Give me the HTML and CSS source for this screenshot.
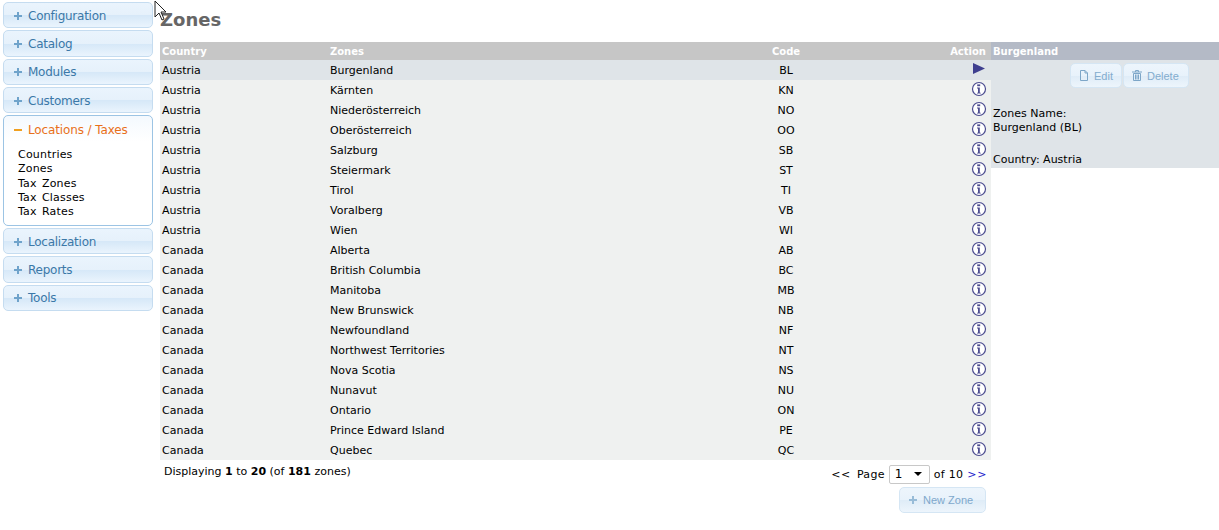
FILE: index.html
```html
<!DOCTYPE html>
<html lang="en">
<head>
<meta charset="utf-8">
<title>Zones</title>
<link rel="stylesheet" href="styles.css">
</head>
<body>
<svg class="cursor" width="14" height="22" viewBox="0 0 14 22"><path d="M1 1v16l4-4 3 7 2-1-3-7h5z" fill="#fff" stroke="#222" stroke-width="1"/></svg>
<svg width="0" height="0" class="defs"><defs>
<symbol id="info" viewBox="0 0 16 16"><circle cx="8" cy="8" r="6.5" fill="#fff" stroke="#4b4b8f" stroke-width="1.2"/><rect x="6.2" y="3.4" width="3" height="1.8" fill="#4b4b8f"/><path d="M6 6.5h2.8v5.2h1v.9H6v-.9h1V7.400H6z" fill="#4b4b8f"/></symbol>
</defs></svg>
<div class="page">
<nav class="side">
<a class="acc"><span class="pm"></span>Configuration</a>
<a class="acc"><span class="pm"></span>Catalog</a>
<a class="acc"><span class="pm"></span>Modules</a>
<a class="acc"><span class="pm"></span>Customers</a>
<div class="open">
<a class="acc-h"><span class="minus"></span>Locations / Taxes</a>
<ul class="sub">
<li>Countries</li><li>Zones</li><li>Tax Zones</li><li>Tax Classes</li><li>Tax Rates</li>
</ul>
</div>
<a class="acc"><span class="pm"></span>Localization</a>
<a class="acc"><span class="pm"></span>Reports</a>
<a class="acc"><span class="pm"></span>Tools</a>
</nav>
<main class="main">
<h1 class="title">Zones</h1>
<div class="work">
<div class="list">
<table class="grid">
<thead><tr><th class="c1">Country</th><th class="c2">Zones</th><th class="c3">Code</th><th class="c4">Action</th></tr></thead>
<tbody>
<tr class="sel"><td>Austria</td><td>Burgenland</td><td class="ctr">BL</td><td class="act"><svg class="play" width="12" height="11" viewBox="0 0 12 11"><path d="M0 0l12 5.500L0 11z" fill="#3f3f8f"/></svg></td></tr>
<tr><td>Austria</td><td>Kärnten</td><td class="ctr">KN</td><td class="act"><svg class="ic"><use href="#info"/></svg></td></tr>
<tr><td>Austria</td><td>Niederösterreich</td><td class="ctr">NO</td><td class="act"><svg class="ic"><use href="#info"/></svg></td></tr>
<tr><td>Austria</td><td>Oberösterreich</td><td class="ctr">OO</td><td class="act"><svg class="ic"><use href="#info"/></svg></td></tr>
<tr><td>Austria</td><td>Salzburg</td><td class="ctr">SB</td><td class="act"><svg class="ic"><use href="#info"/></svg></td></tr>
<tr><td>Austria</td><td>Steiermark</td><td class="ctr">ST</td><td class="act"><svg class="ic"><use href="#info"/></svg></td></tr>
<tr><td>Austria</td><td>Tirol</td><td class="ctr">TI</td><td class="act"><svg class="ic"><use href="#info"/></svg></td></tr>
<tr><td>Austria</td><td>Voralberg</td><td class="ctr">VB</td><td class="act"><svg class="ic"><use href="#info"/></svg></td></tr>
<tr><td>Austria</td><td>Wien</td><td class="ctr">WI</td><td class="act"><svg class="ic"><use href="#info"/></svg></td></tr>
<tr><td>Canada</td><td>Alberta</td><td class="ctr">AB</td><td class="act"><svg class="ic"><use href="#info"/></svg></td></tr>
<tr><td>Canada</td><td>British Columbia</td><td class="ctr">BC</td><td class="act"><svg class="ic"><use href="#info"/></svg></td></tr>
<tr><td>Canada</td><td>Manitoba</td><td class="ctr">MB</td><td class="act"><svg class="ic"><use href="#info"/></svg></td></tr>
<tr><td>Canada</td><td>New Brunswick</td><td class="ctr">NB</td><td class="act"><svg class="ic"><use href="#info"/></svg></td></tr>
<tr><td>Canada</td><td>Newfoundland</td><td class="ctr">NF</td><td class="act"><svg class="ic"><use href="#info"/></svg></td></tr>
<tr><td>Canada</td><td>Northwest Territories</td><td class="ctr">NT</td><td class="act"><svg class="ic"><use href="#info"/></svg></td></tr>
<tr><td>Canada</td><td>Nova Scotia</td><td class="ctr">NS</td><td class="act"><svg class="ic"><use href="#info"/></svg></td></tr>
<tr><td>Canada</td><td>Nunavut</td><td class="ctr">NU</td><td class="act"><svg class="ic"><use href="#info"/></svg></td></tr>
<tr><td>Canada</td><td>Ontario</td><td class="ctr">ON</td><td class="act"><svg class="ic"><use href="#info"/></svg></td></tr>
<tr><td>Canada</td><td>Prince Edward Island</td><td class="ctr">PE</td><td class="act"><svg class="ic"><use href="#info"/></svg></td></tr>
<tr><td>Canada</td><td>Quebec</td><td class="ctr">QC</td><td class="act"><svg class="ic"><use href="#info"/></svg></td></tr>
</tbody>
</table>
<div class="pager">
<div class="count">Displaying <b>1</b> to <b>20</b> (of <b>181</b> zones)</div>
<div class="pages"><span class="prev">&lt;&lt;</span><span class="lbl">Page</span><span class="select"><span>1</span><i class="arrow"></i></span><span class="lbl">of 10</span><span class="next">&gt;&gt;</span></div>
</div>
<div class="foot"><a class="btn new"><span class="pm light"></span>New Zone</a></div>
</div>
<aside class="info">
<div class="info-h">Burgenland</div>
<div class="info-b">
<div class="tools">
<a class="btn edit"><svg width="10" height="11" viewBox="0 0 10 11"><path d="M1.500.5h4.500l2.500 2.500v7.500h-7zM6 .5v2.500h2.500" fill="none" stroke="#7da6c8"/></svg>Edit</a>
<a class="btn del"><svg width="10" height="11" viewBox="0 0 10 11"><path d="M0 2h10M3.500 2V.5h3V2M1.500 3.500h7v7h-7zM3.500 4.500v5M5 4.500v5M6.500 4.500v5" fill="none" stroke="#7da6c8"/></svg>Delete</a>
</div>
<p class="name">Zones Name:<br>Burgenland (BL)</p>
<p class="country">Country: Austria</p>
</div>
</aside>
</div>
</main>
</div>
</body>
</html>
```
FILE: styles.css
```css
* { box-sizing: border-box; }
html, body { margin: 0; padding: 0; }
body { background: #fff; color: #000; font: 11px/14px "DejaVu Sans", Verdana, sans-serif; overflow: hidden; }
.cursor { position: absolute; left: 154px; top: 0; z-index: 5; }
.defs { position: absolute; }
.page { display: flex; align-items: flex-start; }
.side { width: 160px; flex: none; padding: 2px 0 0 3px; display: flex; flex-direction: column; }
.acc, .acc-h { display: flex; align-items: center; padding-top: 1px; font: 12px/16px "DejaVu Sans", Verdana, sans-serif; letter-spacing: -.25px; }
.acc { width: 150px; height: 26.300px; margin-bottom: 2px; border: 1px solid #c5dcf0; border-radius: 5px; color: #3b78a8; background: linear-gradient(#eaf4fd 0, #e6f1fb 50%, #d6e8f8 52%, #eaf4fd 100%); }
.pm { flex: none; width: 8px; height: 8px; margin: 0 6px 0 10px; background: linear-gradient(#6fa3cb, #6fa3cb) center / 8px 2px no-repeat, linear-gradient(#6fa3cb, #6fa3cb) center / 2px 8px no-repeat; }
.pm.light { margin: 0 6px 0 0; background: linear-gradient(#98bcd8, #98bcd8) center / 8px 2px no-repeat, linear-gradient(#98bcd8, #98bcd8) center / 2px 8px no-repeat; }
.minus { flex: none; width: 8px; height: 2px; margin: 0 6px 0 10px; background: #f0a020; }
.open { width: 150px; height: 111px; margin-bottom: 2px; border: 1px solid #9cc4e4; border-radius: 5px; background: linear-gradient(#f4f9fe 0, #fff 26px); }
.acc-h { height: 26px; color: #e8701a; letter-spacing: -.12px; }
.sub { list-style: none; margin: 6px 0 0; padding: 0 0 0 14px; }
.sub li { height: 14.300px; line-height: 14px; letter-spacing: .2px; word-spacing: 1.500px; }
.main { flex: 1; min-width: 0; }
.title { margin: 0; height: 42px; padding-top: 10px; font: bold 18px/20px "DejaVu Sans", Verdana, sans-serif; color: #666; }
.work { display: flex; align-items: flex-start; }
.list { width: 831px; flex: none; }
.grid { width: 831px; border-collapse: collapse; table-layout: fixed; }
.grid th { height: 18px; padding: 2px 2px 0; background: #c6c6c6; color: #fff; font: bold 10px/14px "DejaVu Sans", Verdana, sans-serif; text-align: left; }
.grid td { height: 20px; padding: 2px 2px 0; background: #eff1f0; }
.grid .sel td { background: #dfe4e8; }
.c1 { width: 168px; }
.c2 { width: 432px; }
.c3 { width: 52px; }
.grid .c3 { text-align: center; }
.grid .c4 { text-align: right; padding-right: 5px; }
.ctr { text-align: center; }
.act { text-align: right; }
.ic { display: block; width: 16px; height: 16px; margin: -4px 2px 0 auto; }
.play { display: block; margin: -5px 4px 0 auto; }
.pager { display: flex; justify-content: space-between; padding: 4px 4px 0 4px; height: 27px; }
.count { padding-top: 1px; line-height: 14px; }
.pages { display: flex; align-items: center; height: 20px; }
.prev { margin-right: 6px; letter-spacing: .6px; padding-top: 2px; }
.next { margin-left: 4px; color: #2222cc; letter-spacing: .6px; padding-top: 2px; }
.lbl { padding-top: 2px; letter-spacing: .3px; }
.select { display: flex; justify-content: space-between; align-items: center; width: 41px; height: 19px; margin: 0 4px; padding: 0 5px; border: 1px solid #c8c8c8; border-radius: 2px; font-size: 12px; }
.arrow { width: 0; height: 0; border: 4px solid transparent; border-top: 4px solid #000; border-bottom: 0; margin-right: 2px; }
.foot { display: flex; justify-content: flex-end; padding-right: 5px; }
.btn { display: inline-flex; align-items: center; height: 25px; padding: 0 8px; border: 1px solid #d5e6f4; border-radius: 5px; color: #83acce; font: 11px/14px "Liberation Sans", Arial, sans-serif; white-space: nowrap; background: linear-gradient(#edf5fc 0, #e8f2fb 50%, #dfecf7 52%, #edf5fc 100%); }
.btn svg { flex: none; margin-right: 5px; }
.new { height: 26px; width: 87px; padding: 0 9px; color: #7ea8cc; }
.info { flex: 1; }
.info-h { height: 18px; padding: 1px 2px 0; background: #b4bac6; color: #fff; font: bold 10px/18px "DejaVu Sans", Verdana, sans-serif; }
.info-b { height: 108px; padding: 3px 2px 0; background: #dfe4e8; }
.tools { display: flex; gap: 1px; margin-left: 77px; }
.edit { width: 52px; }
.del { width: 66px; }
.name { margin: 19px 0 0; }
.country { margin: 18px 0 0; }
```
